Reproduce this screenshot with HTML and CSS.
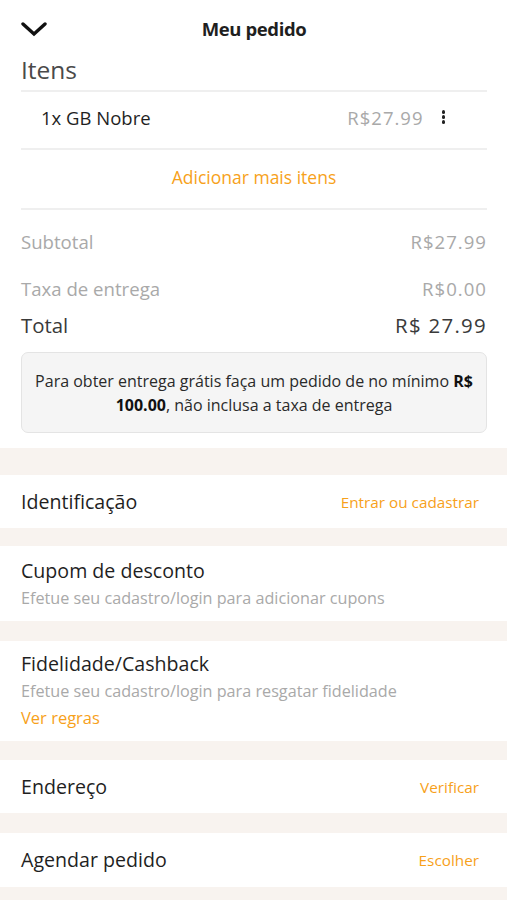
FILE: index.html
```html
<!DOCTYPE html>
<html lang="pt-BR">

<head>
    <meta charset="UTF-8">
    <meta name="viewport" content="width=device-width, initial-scale=1.0">
    <title>Meu pedido</title>
    <link rel="stylesheet" href="styles.css">
</head>

<body>
    <!-- Order summary -->
    <div class="order">
        <div class="header">
            <button class="back" aria-label="Fechar">
                <svg width="26" height="16" viewBox="0 0 26 16">
                    <polyline points="2,3 13,13 24,3" fill="none" stroke="#111" stroke-width="3.4" stroke-linecap="round" stroke-linejoin="miter" />
                </svg>
            </button>
            <h1>Meu pedido</h1>
            <span></span>
        </div>

        <h2 class="section-title">Itens</h2>

        <div class="item">
            <span class="item-name">1x GB Nobre</span>
            <span class="item-price">R$27.99</span>
            <span class="kebab"><i></i><i></i><i></i></span>
        </div>

        <div class="add-more">Adicionar mais itens</div>

        <div class="summary">
            <div class="row subtotal"><span>Subtotal</span><span class="value">R$27.99</span></div>
            <div class="row fee"><span>Taxa de entrega</span><span class="value">R$0.00</span></div>
            <div class="row total"><span>Total</span><span class="value">R$ 27.99</span></div>
        </div>

        <div class="notice">
            Para obter entrega grátis faça um pedido de no mínimo <b>R$ 100.00</b>, não inclusa a taxa de entrega
        </div>
    </div>

    <!-- Checkout options -->
    <div class="option">
        <span class="option-title">Identificação</span>
        <span class="link">Entrar ou cadastrar</span>
    </div>

    <div class="option stacked coupon">
        <div class="option-title">Cupom de desconto</div>
        <div class="option-sub">Efetue seu cadastro/login para adicionar cupons</div>
    </div>

    <div class="option stacked loyalty">
        <div class="option-title">Fidelidade/Cashback</div>
        <div class="option-sub">Efetue seu cadastro/login para resgatar fidelidade</div>
        <div class="link rules">Ver regras</div>
    </div>

    <div class="option">
        <span class="option-title">Endereço</span>
        <span class="link">Verificar</span>
    </div>

    <div class="option schedule">
        <span class="option-title">Agendar pedido</span>
        <span class="link">Escolher</span>
    </div>
</body>

</html>
```

FILE: styles.css
```css
:root {
    --text: #1f1f1f;
    --muted: #a9a9a9;
    --accent: #f7a11a;
    --line: #efefef;
    --band: #f8f3ef;
}

body {
    margin: 0;
    background-color: var(--band);
    font-family: 'Open Sans', 'Lato', sans-serif;
    color: var(--text);
}

/* Order card */
.order {
    background-color: #fff;
    padding: 0 20px 15px 21px;
    margin-bottom: 27px;
}

.header {
    display: grid;
    grid-template-columns: 1fr auto 1fr;
    align-items: center;
    height: 56px;
}

.back {
    justify-self: start;
    display: flex;
    padding: 0;
    margin-top: 1px;
    border: none;
    background: none;
    cursor: pointer;
}

h1 {
    margin: 0;
    font-size: 18.5px;
    font-weight: 700;
    letter-spacing: -0.4px;
}

.section-title {
    margin: 0;
    height: 34px;
    line-height: 27px;
    font-size: 24.5px;
    font-weight: 400;
    color: #4a4a4a;
    border-bottom: 2px solid var(--line);
}

.item {
    display: flex;
    align-items: center;
    height: 56px;
    padding: 0 20px;
    font-size: 18.5px;
    line-height: 22px;
    border-bottom: 2px solid var(--line);
}

.item-name {
    flex: 1;
    margin-bottom: 4px;
}

.item-price {
    color: var(--muted);
    letter-spacing: 1px;
    margin-bottom: 4px;
}

.kebab {
    display: flex;
    flex-direction: column;
    gap: 1.5px;
    margin: 0 22px 0 18px;
    padding-bottom: 6px;
}

.kebab i {
    width: 3.5px;
    height: 3.5px;
    border-radius: 50%;
    background-color: #222;
}

.add-more {
    height: 58px;
    line-height: 55px;
    text-align: center;
    font-size: 17.5px;
    color: var(--accent);
    border-bottom: 2px solid var(--line);
}

.summary {
    padding-top: 17px;
}

.row {
    display: flex;
    justify-content: space-between;
    height: 32px;
    line-height: 30px;
    font-size: 18.6px;
    color: var(--muted);
}

.row .value {
    letter-spacing: 1px;
}

.fee {
    margin-top: 15px;
}

.total {
    margin-top: 4px;
    font-size: 20.4px;
    color: #3a3a3a;
}

.total .value {
    letter-spacing: 1.3px;
}

.notice {
    margin-top: 10px;
    padding: 16px 8px 15px;
    background-color: #f5f5f5;
    border: 1px solid #e4e4e4;
    border-radius: 7px;
    text-align: center;
    font-size: 16px;
    line-height: 24px;
    color: #2a2a2a;
}

.notice b {
    font-weight: 700;
    color: #111;
}

/* Options */
.option {
    display: flex;
    justify-content: space-between;
    align-items: center;
    height: 53px;
    padding: 0 28px 0 21px;
    margin-bottom: 18px;
    background-color: #fff;
}

.option-title {
    font-size: 19.6px;
    line-height: 26px;
}

.link {
    font-size: 15.3px;
    color: var(--accent);
}

.stacked {
    display: block;
    height: auto;
}

.option-sub {
    font-size: 16.2px;
    line-height: 28px;
    color: var(--muted);
}

.coupon {
    padding-top: 12px;
    padding-bottom: 9px;
    margin-bottom: 20px;
}

.loyalty {
    padding-top: 10px;
    padding-bottom: 10px;
    margin-bottom: 19px;
}

.loyalty .rules {
    font-size: 16.5px;
    line-height: 26px;
}

.schedule {
    height: 54px;
    margin-top: 20px;
}
```
